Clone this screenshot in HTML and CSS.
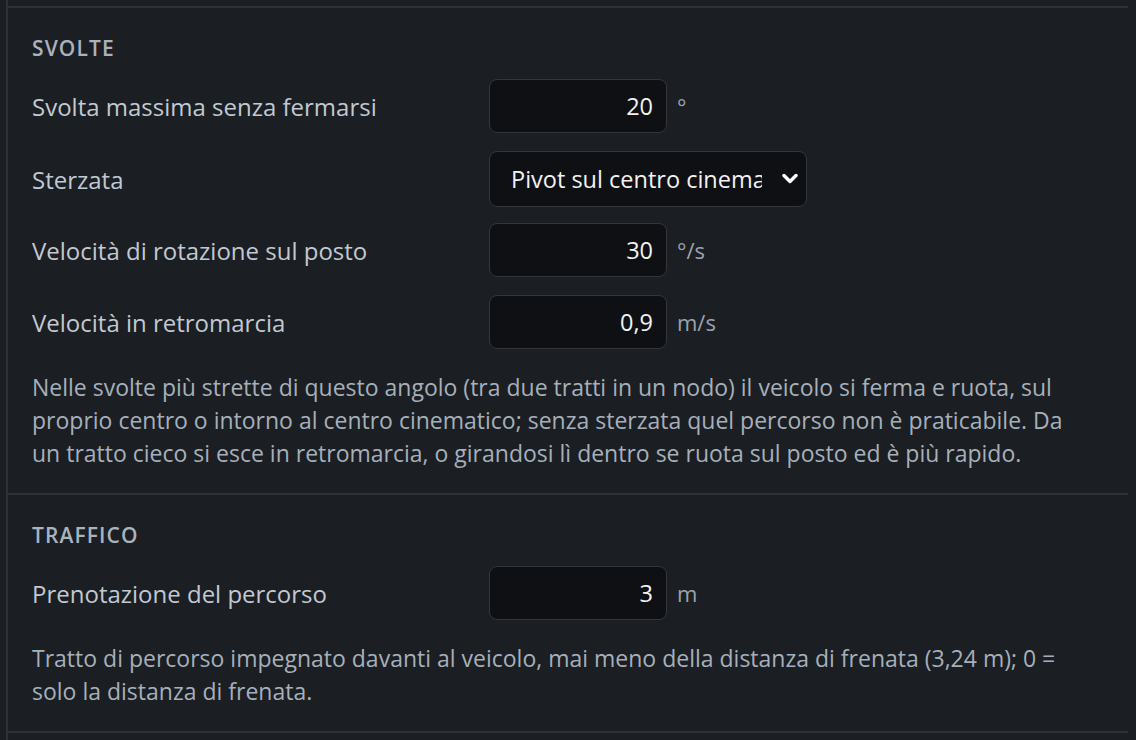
FILE: index.html
```html
<!DOCTYPE html>
<html lang="it">
<head>
<meta charset="utf-8">
<title>Impostazioni veicolo</title>
<link rel="stylesheet" href="styles.css">
</head>
<body>
<div class="panel">
  <section class="group">
    <h3 class="group-title">Svolte</h3>
    <div class="rows">
      <div class="row">
        <label class="label" for="f1">Svolta massima senza fermarsi</label>
        <div class="field"><input id="f1" class="num" type="text" value="20"><span class="unit">°</span></div>
      </div>
      <div class="row">
        <label class="label" for="f2">Sterzata</label>
        <div class="field">
          <div class="select-wrap">
            <select id="f2" class="select"><option>Pivot sul centro cinematico</option></select>
            <svg class="chev" viewBox="0 0 16 12" width="16" height="12" aria-hidden="true"><path d="M2 2.5 8 8.5l6-6" fill="none" stroke="#ffffff" stroke-width="3.4" stroke-linecap="round" stroke-linejoin="round"/></svg>
          </div>
        </div>
      </div>
      <div class="row">
        <label class="label" for="f3">Velocità di rotazione sul posto</label>
        <div class="field"><input id="f3" class="num" type="text" value="30"><span class="unit">°/s</span></div>
      </div>
      <div class="row">
        <label class="label" for="f4">Velocità in retromarcia</label>
        <div class="field"><input id="f4" class="num" type="text" value="0,9"><span class="unit">m/s</span></div>
      </div>
    </div>
    <p class="desc">Nelle svolte più strette di questo angolo (tra due tratti in un nodo) il veicolo si ferma e ruota, sul proprio centro o intorno al centro cinematico; senza sterzata quel percorso non è praticabile. Da un tratto cieco si esce in retromarcia, o girandosi lì dentro se ruota sul posto ed è più rapido.</p>
  </section>
  <section class="group">
    <h3 class="group-title">Traffico</h3>
    <div class="rows">
      <div class="row">
        <label class="label" for="f5">Prenotazione del percorso</label>
        <div class="field"><input id="f5" class="num" type="text" value="3"><span class="unit">m</span></div>
      </div>
    </div>
    <p class="desc">Tratto di percorso impegnato davanti al veicolo, mai meno della distanza di frenata (3,24 m); 0 = solo la distanza di frenata.</p>
  </section>
  <section class="group group-tail"></section>
</div>
</body>
</html>
```

FILE: styles.css
```css
html, body {
  margin: 0;
  padding: 0;
  background: #1b1e23;
  height: 100%;
  overflow: hidden;
}

body {
  font-family: "Open Sans", "Noto Sans", "Liberation Sans", sans-serif;
  color: #c6ced7;
}

.panel {
  margin-left: 6px;
  margin-right: 8px;
  padding-top: 6px;
  border-left: 2px solid #2e3137;
  min-height: 100%;
  box-sizing: border-box;
}

.group {
  border-top: 2px solid #2e3137;
  padding: 28px 24px 23px 24px;
}

.group-title {
  margin: 0;
  font-size: 21px;
  line-height: 24px;
  font-weight: 600;
  letter-spacing: 1.1px;
  text-transform: uppercase;
  color: #a9b3be;
}

.rows {
  display: flex;
  flex-direction: column;
  gap: 18px;
  margin-top: 19px;
}

.row {
  display: grid;
  grid-template-columns: 457px 1fr;
  align-items: center;
  height: 54px;
}

.label {
  font-size: 24px;
  color: #c1c9d2;
}

.field {
  display: flex;
  align-items: center;
  gap: 10px;
}

.num {
  width: 178px;
  height: 54px;
  box-sizing: border-box;
  background: #0e1014;
  border: 1.5px solid #33363c;
  border-radius: 8px;
  color: #f2f2f2;
  font-family: inherit;
  font-size: 23.5px;
  text-align: right;
  padding: 0 13px;
  outline: none;
}

.unit {
  font-size: 22px;
  color: #9aa3ad;
}

.select-wrap {
  position: relative;
  width: 318px;
}

.select {
  appearance: none;
  -webkit-appearance: none;
  display: block;
  width: 318px;
  height: 56px;
  box-sizing: border-box;
  background: #0e1014;
  border: 1.5px solid #33363c;
  border-radius: 8px;
  color: #f2f2f2;
  font-family: inherit;
  font-size: 23.5px;
  padding: 0 44px 0 21px;
  outline: none;
}

.chev {
  position: absolute;
  right: 9px;
  top: 22px;
  pointer-events: none;
}

.desc {
  margin: 22px 0 0 0;
  max-width: 1045px;
  font-size: 23px;
  line-height: 33px;
  color: #a6b0ba;
}

.group-tail {
  padding: 0;
  height: 20px;
}
```
